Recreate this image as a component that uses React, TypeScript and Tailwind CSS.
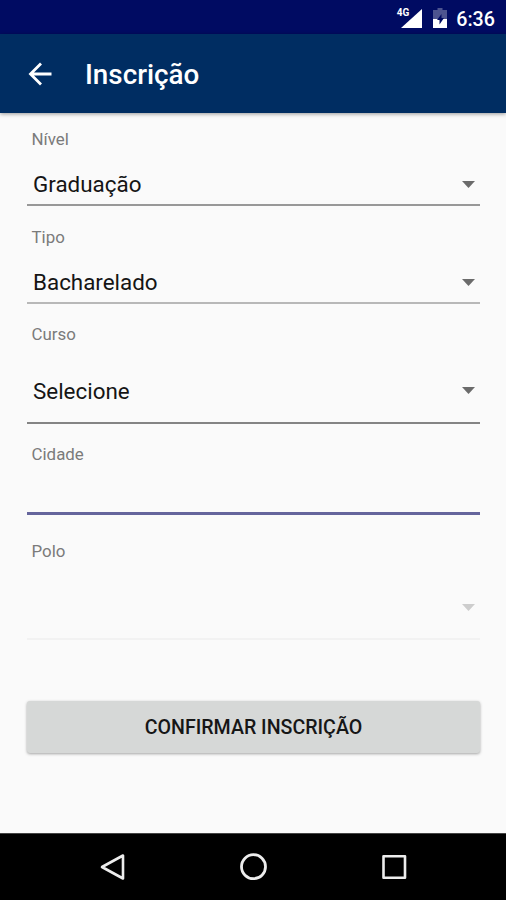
import React from 'react';
import { clsx } from 'clsx';

interface SelectFieldProps {
  label: string;
  value?: string;
  disabled?: boolean;
  className?: string;
  lineClass: string;
}

const SelectField: React.FC<SelectFieldProps> = ({ label, value, disabled, className, lineClass }) => {
  return (
    <div className={clsx('flex flex-col', className)}>
      <label className="h-5 pl-[4.5px] text-[16.9px] leading-5 text-[#7b7b7b]">{label}</label>
      <button
        disabled={disabled}
        className="mt-[13px] flex min-h-0 flex-1 items-center justify-between pt-0.5 pr-[5px] pl-1.5 text-left"
      >
        <span className="text-[22.4px] leading-7 text-[#151515]">{value}</span>
        <svg width="13" height="7" viewBox="0 0 13 7" className={disabled ? 'text-[#cdcdcd]' : 'text-[#6b6b6b]'}>
          <path d="M0 0h13L6.5 7z" fill="currentColor" />
        </svg>
      </button>
      <div className={clsx('w-full shrink-0', lineClass)} />
    </div>
  );
};

function StatusBar() {
  return (
    <div className="flex h-[34px] items-center justify-end bg-[#000b62] pt-0.5 pr-[11px] text-white">
      {/* Mobile signal */}
      <span className="mb-2.5 text-[10px] leading-none font-bold">4G</span>
      <svg width="21" height="19" viewBox="0 0 21 19" className="-ml-[8px]">
        <path d="M21 0v19H0z" fill="currentColor" />
      </svg>
      {/* Battery, charging */}
      <svg width="14" height="20" viewBox="0 0 14 20" className="mr-[9px] ml-[11px]">
        <path d="M4.5 0h5v2H14v9H0V2h4.5z" fill="#4d548f" />
        <path d="M0 11h14v9H0z" fill="currentColor" />
        <path d="M8.5 6 4 12h2.5v4.5L11 10H8.5z" fill="#000b62" />
      </svg>
      <span className="pt-[3px] text-[19.7px] leading-none font-medium">6:36</span>
    </div>
  );
}

function NavigationBar() {
  return (
    <nav className="flex h-[67px] items-center justify-center gap-[113px] border-t border-[#444] bg-black text-[#ededed]">
      <svg width="28" height="28" viewBox="0 0 28 28" fill="none" stroke="currentColor" strokeWidth="2.6" strokeLinejoin="round">
        <path d="M25 2.5v23L4 14z" />
      </svg>
      <svg width="28" height="28" viewBox="0 0 28 28" fill="none" stroke="currentColor" strokeWidth="2.8">
        <circle cx="14.5" cy="13.7" r="12" />
      </svg>
      <svg width="28" height="28" viewBox="0 0 28 28" fill="none" stroke="currentColor" strokeWidth="2.6" strokeLinejoin="round">
        <path d="M3.5 3.2h21.5v21.5h-21.5z" />
      </svg>
    </nav>
  );
}

export default function App() {
  return (
    <div className="flex h-[900px] w-[506px] flex-col overflow-hidden bg-[#fafafa] font-[Roboto,sans-serif]">
      <StatusBar />

      <header className="z-10 flex h-[79px] shrink-0 items-center bg-[#002d62] pl-7 text-white shadow-[0_1px_4px_rgba(0,0,0,0.4)]">
        <svg width="24" height="24" viewBox="0 0 24 24" fill="none" stroke="currentColor" strokeWidth="2.8">
          <path d="M23.5 12H2.5M13 1.5 2.5 12 13 22.5" />
        </svg>
        <h1 className="ml-[33px] pt-[3px] text-[27.8px] leading-none font-medium">Inscrição</h1>
      </header>

      <main className="flex flex-1 flex-col pt-4 pr-[26px] pl-[27px]">
        <SelectField label="Nível" value="Graduação" className="h-[77px]" lineClass="h-[2px] bg-[#989898]" />
        <SelectField label="Tipo" value="Bacharelado" className="mt-[21px] h-[77px]" lineClass="h-[2px] bg-[#b8b8b8]" />
        <SelectField label="Curso" value="Selecione" className="mt-5 h-[100px]" lineClass="h-[2px] bg-[#848484]" />

        <div className="mt-5 flex h-[71px] flex-col">
          <label htmlFor="cidade" className="h-5 pl-[4.5px] text-[16.9px] leading-5 text-[#7b7b7b]">Cidade</label>
          <input
            id="cidade"
            className="min-h-0 w-full flex-1 border-b-[3px] border-[#65659c] px-1 text-[22.5px] outline-none"
          />
        </div>

        <SelectField label="Polo" disabled className="mt-[26px] h-[99px]" lineClass="h-[2px] bg-[#f2f2f2]" />

        <button className="mt-[61px] h-[52px] rounded-[3px] bg-[#d6d8d7] pt-0.5 text-[19.6px] font-medium text-[#161616] shadow-[0_1px_3px_rgba(0,0,0,0.35)]">
          CONFIRMAR INSCRIÇÃO
        </button>
      </main>

      <NavigationBar />
    </div>
  );
}
